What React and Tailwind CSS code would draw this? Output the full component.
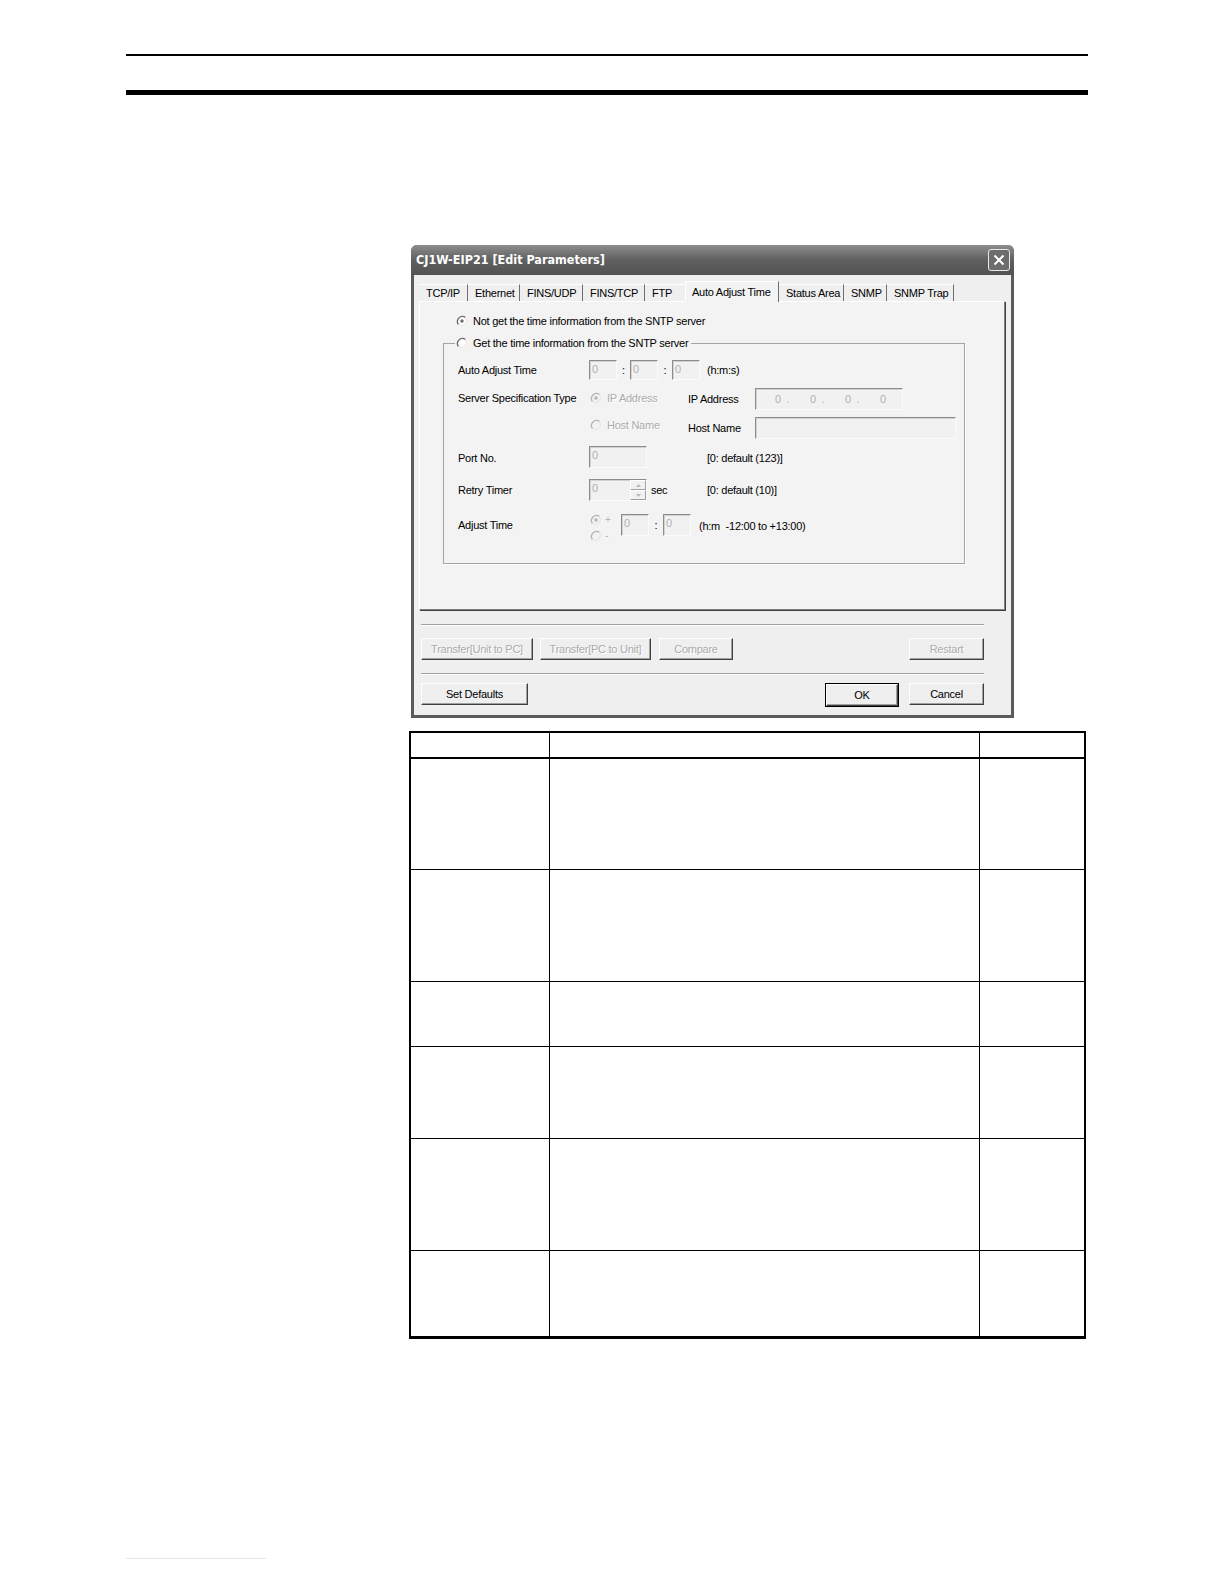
import React from "react";

const font = "font-['Liberation_Sans',Arial,sans-serif]";

function Radio({ checked, disabled }) {
  const dark = disabled ? "#b4b4b4" : "#6a6a6a";
  return (
    <svg width="12" height="12" viewBox="0 0 12 12" className="shrink-0">
      <circle cx="6" cy="6" r="5" fill={disabled ? "#f2f2f2" : "#ffffff"} />
      <path d="M9.5 2.5 A5 5 0 0 0 2.5 9.5" stroke={dark} strokeWidth="1.3" fill="none" />
      <path d="M9.5 2.5 A5 5 0 0 1 2.5 9.5" stroke="#e4e4e4" strokeWidth="1" fill="none" />
      {checked && <circle cx="6" cy="6" r="1.7" fill={dark} />}
    </svg>
  );
}

function Field({ w, value = "0", h = "h-[22px]" }) {
  return (
    <div
      className={`${w} ${h} shrink-0 bg-[#f1f1f1] border border-t-[#8c8c8c] border-l-[#8c8c8c] border-b-[#fbfbfb] border-r-[#fbfbfb] shadow-[inset_1px_1px_0_#d2d2d2] pl-[2px] text-[#b0b0b0] leading-[16px]`}
    >
      {value}
    </div>
  );
}

function Btn({ w, children, disabled }) {
  return (
    <div
      className={`${w} h-[22px] flex items-center justify-center bg-[#efefef] border border-t-white border-l-white border-b-[#404040] border-r-[#404040] shadow-[inset_-1px_-1px_0_#a0a0a0] ${
        disabled ? "text-[#ababab] [text-shadow:1px_1px_0_#ffffff]" : "text-black"
      }`}
    >
      {children}
    </div>
  );
}

function Tab({ w, label, selected }) {
  if (selected) {
    return (
      <div
        className={`${w} h-[21px] relative z-10 -mb-px bg-[#f3f3f3] border-t border-l border-t-white border-l-white border-r border-r-[#6e6e6e] flex items-start pt-[2px] pl-[6px]`}
      >
        {label}
      </div>
    );
  }
  return (
    <div className={`${w} h-[17px] border-r border-r-[#6e6e6e] border-t border-t-white flex items-center pl-[7px]`}>
      {label}
    </div>
  );
}

function Etched({ w }) {
  return (
    <div className={`${w} ml-[2px]`}>
      <div className="h-px bg-[#a0a0a0]" />
      <div className="h-px bg-white" />
    </div>
  );
}

export default function App() {
  const tableRows = [111, 112, 65, 92, 112, 85];

  return (
    <div className={`w-full max-w-[1224px] h-[1584px] overflow-hidden bg-white flex flex-col ${font}`}>
      {/* page rules */}
      <div className="mt-[54px] ml-[126px] w-[962px] h-[2px] shrink-0 bg-black" />
      <div className="mt-[34px] ml-[126px] w-[962px] h-[5px] shrink-0 bg-black" />

      {/* dialog */}
      <div className="mt-[150px] ml-[411px] w-[603px] h-[473px] shrink-0 bg-[#5b5b5b] rounded-t-[6px] flex flex-col">
        <div className="h-[30px] shrink-0 rounded-t-[6px] bg-linear-to-b from-[#8e8e8e] via-[#606060] to-[#525252] flex items-center justify-between pl-[5px] pr-[4px]">
          <span className="text-white font-bold text-[12.5px] font-['DejaVu_Sans_Condensed','Liberation_Sans',sans-serif]">
            CJ1W-EIP21 [Edit Parameters]
          </span>
          <div className="w-[22px] h-[22px] rounded-[3px] border border-[#e8e8e8] bg-[#6d6d6d] flex items-center justify-center">
            <svg width="12" height="12" viewBox="0 0 12 12">
              <path d="M1.5 1.5 L10.5 10.5 M10.5 1.5 L1.5 10.5" stroke="#ffffff" strokeWidth="2" />
            </svg>
          </div>
        </div>

        <div className="flex-1 mx-[3px] mb-[3px] bg-[#efefef] pl-[5px] pt-[6px] text-[11px] tracking-[-0.25px] text-black">
          {/* tabs */}
          <div className="flex items-end h-[20px]">
            <Tab w="w-[49px]" label="TCP/IP" />
            <Tab w="w-[52px]" label="Ethernet" />
            <Tab w="w-[63px]" label="FINS/UDP" />
            <Tab w="w-[62px]" label="FINS/TCP" />
            <div className="w-[40px] h-[17px] border-t border-t-white flex items-center pl-[7px]">FTP</div>
            <Tab w="w-[94px]" label="Auto Adjust Time" selected />
            <Tab w="w-[65px]" label="Status Area" />
            <Tab w="w-[43px]" label="SNMP" />
            <Tab w="w-[67px]" label="SNMP Trap" />
          </div>

          {/* tab panel */}
          <div className="w-[586px] h-[309px] bg-[#f3f3f3] border border-t-white border-l-white border-r-[#808080] border-b-[#808080] shadow-[1px_1px_0_#404040] flex flex-col">
            <div className="mt-[12px] ml-[36px] h-[14px] flex items-center gap-[5px]">
              <Radio checked />
              <span>Not get the time information from the SNTP server</span>
            </div>

            <fieldset className="mt-[8px] ml-[23px] w-[522px] h-[228px] p-0 border border-[#a4a4a4] shadow-[1px_1px_0_#ffffff]">
              <legend className="ml-[11px] px-[1px] h-[14px] flex items-center gap-[5px]">
                <Radio />
                <span className="pr-[2px]">Get the time information from the SNTP server</span>
              </legend>

              <div className="pl-[14px] flex flex-col">
                <div className="mt-[10px] h-[20px] flex items-center">
                  <div className="w-[131px] shrink-0">Auto Adjust Time</div>
                  <Field w="w-[28px]" h="h-[20px]" />
                  <div className="w-[13px] text-center">:</div>
                  <Field w="w-[28px]" h="h-[20px]" />
                  <div className="w-[14px] text-center">:</div>
                  <Field w="w-[28px]" h="h-[20px]" />
                  <div className="ml-[7px]">(h:m:s)</div>
                </div>

                <div className="mt-[8px] h-[22px] flex items-center">
                  <div className="w-[131px] shrink-0 -mt-[2px]">Server Specification Type</div>
                  <div className="w-[99px] shrink-0 flex items-center gap-[5px] pl-[1px] -mt-[2px] text-[#ababab] [text-shadow:1px_1px_0_#ffffff]">
                    <Radio checked disabled />
                    <span>IP Address</span>
                  </div>
                  <div className="w-[67px] shrink-0 mt-[1px]">IP Address</div>
                  <div className="w-[148px] h-[22px] bg-[#f1f1f1] border border-t-[#8c8c8c] border-l-[#8c8c8c] border-b-[#fbfbfb] border-r-[#fbfbfb] shadow-[inset_1px_1px_0_#d2d2d2] flex items-center text-[#b0b0b0] pl-[19px]">
                    <span className="w-[35px]">0&nbsp;&nbsp;.</span>
                    <span className="w-[35px]">0&nbsp;&nbsp;.</span>
                    <span className="w-[35px]">0&nbsp;&nbsp;.</span>
                    <span>0</span>
                  </div>
                </div>

                <div className="mt-[7px] h-[22px] flex items-center">
                  <div className="w-[131px] shrink-0" />
                  <div className="w-[99px] shrink-0 flex items-center gap-[5px] pl-[1px] -mt-[6px] text-[#ababab] [text-shadow:1px_1px_0_#ffffff]">
                    <Radio disabled />
                    <span>Host Name</span>
                  </div>
                  <div className="w-[67px] shrink-0">Host Name</div>
                  <Field w="w-[201px]" value="" />
                </div>

                <div className="mt-[7px] h-[22px] flex items-center">
                  <div className="w-[131px] shrink-0 mt-[3px]">Port No.</div>
                  <Field w="w-[58px]" />
                  <div className="ml-[60px] mt-[2px]">[0: default (123)]</div>
                </div>

                <div className="mt-[11px] h-[22px] flex items-center">
                  <div className="w-[131px] shrink-0">Retry Timer</div>
                  <div className="w-[118px] shrink-0 flex items-center">
                    <div className="w-[58px] h-[22px] flex bg-[#f1f1f1] border border-t-[#8c8c8c] border-l-[#8c8c8c] border-b-[#fbfbfb] border-r-[#fbfbfb] shadow-[inset_1px_1px_0_#d2d2d2]">
                      <div className="flex-1 pl-[2px] text-[#b0b0b0] leading-[16px]">0</div>
                      <div className="w-[16px] flex flex-col">
                        <div className="flex-1 border border-t-white border-l-white border-b-[#a0a0a0] border-r-[#a0a0a0] flex items-center justify-center">
                          <svg width="5" height="3" viewBox="0 0 5 3"><path d="M0 3 L2.5 0 L5 3 Z" fill="#b8b8b8" /></svg>
                        </div>
                        <div className="flex-1 border border-t-white border-l-white border-b-[#a0a0a0] border-r-[#a0a0a0] flex items-center justify-center">
                          <svg width="5" height="3" viewBox="0 0 5 3"><path d="M0 0 L2.5 3 L5 0 Z" fill="#b8b8b8" /></svg>
                        </div>
                      </div>
                    </div>
                    <span className="ml-[4px]">sec</span>
                  </div>
                  <div>[0: default (10)]</div>
                </div>

                <div className="mt-[13px] h-[22px] flex items-center">
                  <div className="w-[131px] shrink-0">Adjust Time</div>
                  <div className="w-[32px] shrink-0 flex flex-col gap-[4px] pl-[1px] pt-[5px] text-[#b4b4b4] text-[10px] leading-[12px]">
                    <div className="flex items-center gap-[3px]">
                      <Radio checked disabled />
                      <span>+</span>
                    </div>
                    <div className="flex items-center gap-[3px]">
                      <Radio disabled />
                      <span>-</span>
                    </div>
                  </div>
                  <Field w="w-[28px]" />
                  <div className="w-[14px] text-center">:</div>
                  <Field w="w-[28px]" />
                  <div className="ml-[8px] mt-[2px]">(h:m&nbsp;&nbsp;-12:00 to +13:00)</div>
                </div>
              </div>
            </fieldset>
          </div>

          <div className="mt-[14px]">
            <Etched w="w-[563px]" />
          </div>

          <div className="mt-[12px] ml-[2px] w-[563px] flex justify-between">
            <div className="flex">
              <Btn w="w-[112px]" disabled>Transfer[Unit to PC]</Btn>
              <div className="ml-[7px]">
                <Btn w="w-[111px]" disabled>Transfer[PC to Unit]</Btn>
              </div>
              <div className="ml-[8px]">
                <Btn w="w-[74px]" disabled>Compare</Btn>
              </div>
            </div>
            <Btn w="w-[75px]" disabled>Restart</Btn>
          </div>

          <div className="mt-[13px]">
            <Etched w="w-[563px]" />
          </div>

          <div className="mt-[8px] ml-[2px] w-[563px] flex justify-between">
            <Btn w="w-[107px]">Set Defaults</Btn>
            <div className="flex gap-[10px]">
              <div className="border border-black">
                <Btn w="w-[72px]">OK</Btn>
              </div>
              <Btn w="w-[75px]">Cancel</Btn>
            </div>
          </div>
        </div>
      </div>

      {/* table */}
      <div className="mt-[13px] ml-[409px] w-[677px] shrink-0 border-l-2 border-r-2 border-t-2 border-b-[3px] border-black">
        <div className="h-[26px] grid grid-cols-[139px_430px_1fr] border-b-2 border-black">
          <div className="border-r border-black" />
          <div className="border-r border-black" />
          <div />
        </div>
        {tableRows.map((h, i) => (
          <div
            key={i}
            style={{ height: h }}
            className={`grid grid-cols-[139px_430px_1fr] ${i < tableRows.length - 1 ? "border-b border-black" : ""}`}
          >
            <div className="border-r border-black" />
            <div className="border-r border-black" />
            <div />
          </div>
        ))}
      </div>

      <div className="mt-[219px] ml-[126px] w-[140px] h-px shrink-0 bg-[#e4e6ee]" />
    </div>
  );
}
